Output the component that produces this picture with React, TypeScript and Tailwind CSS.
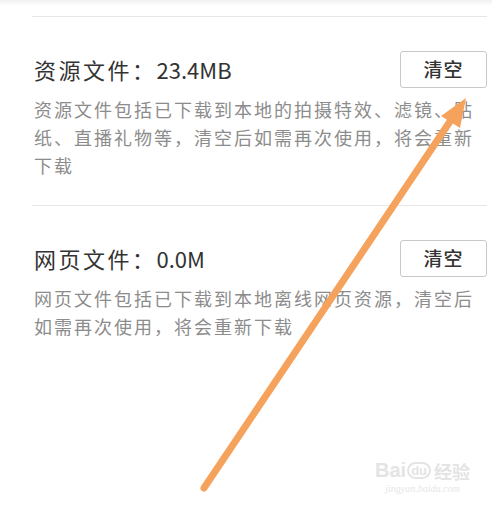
import React from "react";

const font = { fontFamily: '"Noto Sans CJK SC", "Noto Sans", sans-serif' };

function Section({ name, size, desc }: { name: string; size: string; desc: string }) {
  return (
    <div className="border-t border-[#e6e6e6] pt-[34px] pb-[26px]">
      <div className="flex items-center justify-between">
        <div className="ml-[2px] text-[22px] leading-[37px] text-[#333333]">
          <span className="tracking-[2.5px]">{name}：</span>
          <span>{size}</span>
        </div>
        <button className="w-[87px] h-[37px] border border-[#c9c9c9] rounded-[3px] bg-white text-[19px] text-[#333333] font-medium tracking-[1px] flex items-center justify-center">
          清空
        </button>
      </div>
      <p className="ml-[2px] mt-[7px] w-[445px] text-[18px] leading-[28px] tracking-[2px] text-[#8c8c8c]">
        {desc}
      </p>
    </div>
  );
}

export default function App() {
  return (
    <div className="relative w-[492px] h-[517px] bg-white overflow-hidden" style={font}>
      <div className="h-[6px] bg-gradient-to-b from-[#f0f0f0] to-white" />
      <div className="pl-[32px] pr-[5px] pt-[10px]">
        <Section
          name="资源文件"
          size="23.4MB"
          desc="资源文件包括已下载到本地的拍摄特效、滤镜、贴纸、直播礼物等，清空后如需再次使用，将会重新下载"
        />
        <Section
          name="网页文件"
          size="0.0M"
          desc="网页文件包括已下载到本地离线网页资源，清空后如需再次使用，将会重新下载"
        />
      </div>

      <svg className="absolute left-0 top-0 pointer-events-none" width="492" height="517" viewBox="0 0 492 517">
        <line x1="204" y1="488" x2="455" y2="114" stroke="#f5a25d" strokeWidth="7" strokeLinecap="round" />
        <polygon points="466,98 460,128 441,116" fill="#f5a25d" />
      </svg>

      <div className="absolute left-[375px] top-[460px] flex flex-col items-center leading-none pointer-events-none">
        <div className="flex items-end gap-[1px] text-[#e4e4e4]">
          <span className="text-[20px] font-bold" style={{ fontFamily: '"Liberation Sans", sans-serif' }}>Bai</span>
          <span className="relative text-[13px] font-bold border-2 border-[#e4e4e4] rounded-full px-[2px] mb-[1px]" style={{ fontFamily: '"Liberation Sans", sans-serif' }}>du</span>
          <span className="text-[18px] font-bold ml-[2px]">经验</span>
        </div>
        <div className="mt-[4px] text-[10px] italic text-[#e6e6e6]" style={{ fontFamily: '"Liberation Serif", serif' }}>
          jingyan.baidu.com
        </div>
      </div>
    </div>
  );
}
